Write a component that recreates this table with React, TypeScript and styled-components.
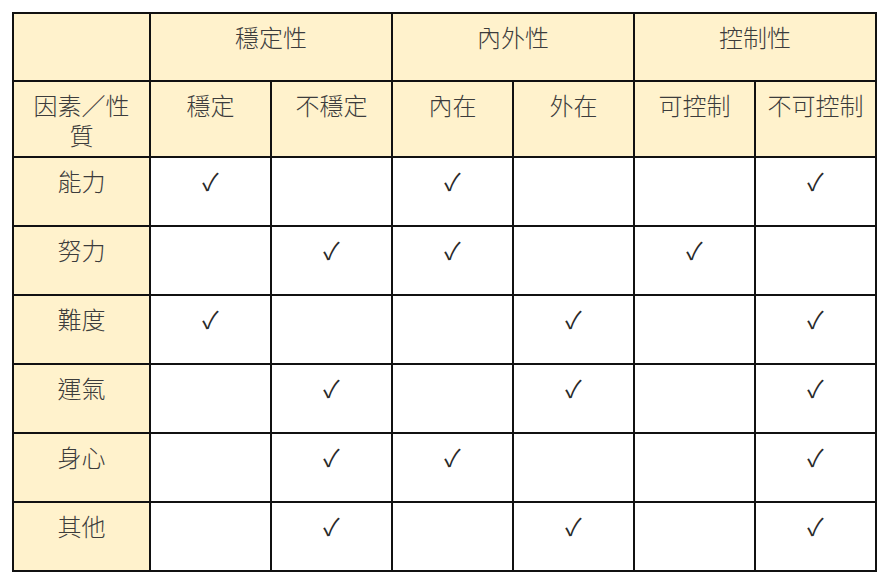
import React from "react";
import styled, { createGlobalStyle } from "styled-components";

const GlobalStyle = createGlobalStyle`
  html, body { margin: 0; padding: 0; background: #ffffff; }
  body { font-family: "Noto Sans CJK TC", "Noto Sans CJK SC", "Noto Sans", sans-serif; }
`;

const Page = styled.div`
  padding: 12px 0 0 12px;
`;

const Grid = styled.div`
  display: grid;
  width: max-content;
  grid-template-columns: 135px repeat(6, 119px);
  grid-template-rows: 66px 74px repeat(6, 67px);
  gap: 2px;
  padding: 2px;
  background: #111111;
`;

const Cell = styled.div<{ $head?: boolean; $span?: number }>`
  grid-column: span ${(p) => p.$span ?? 1};
  background: ${(p) => (p.$head ? "#fff2cc" : "#ffffff")};
  color: #3c3c3c;
  font-size: 24px;
  font-weight: 300;
  line-height: 30px;
  text-align: center;
  padding: 8px 10px 0;
  box-sizing: border-box;
  overflow: hidden;
`;

const Check = styled.span`
  font-family: "Noto Sans CJK TC", "DejaVu Sans", sans-serif;
  font-size: 24px;
  font-weight: 400;
  color: #2a2a2a;
`;

const subHeads = ["穩定", "不穩定", "內在", "外在", "可控制", "不可控制"];

const rows: { name: string; marks: boolean[] }[] = [
  { name: "能力", marks: [true, false, true, false, false, true] },
  { name: "努力", marks: [false, true, true, false, true, false] },
  { name: "難度", marks: [true, false, false, true, false, true] },
  { name: "運氣", marks: [false, true, false, true, false, true] },
  { name: "身心", marks: [false, true, true, false, false, true] },
  { name: "其他", marks: [false, true, false, true, false, true] },
];

export default function App() {
  return (
    <>
      <GlobalStyle />
      <Page>
        <Grid>
          <Cell $head />
          <Cell $head $span={2}>穩定性</Cell>
          <Cell $head $span={2}>內外性</Cell>
          <Cell $head $span={2}>控制性</Cell>
          <Cell $head>因素／性質</Cell>
          {subHeads.map((h) => (
            <Cell $head key={h}>{h}</Cell>
          ))}
          {rows.map((r) => (
            <React.Fragment key={r.name}>
              <Cell $head>{r.name}</Cell>
              {r.marks.map((m, i) => (
                <Cell key={i}>{m ? <Check>✓</Check> : null}</Cell>
              ))}
            </React.Fragment>
          ))}
        </Grid>
      </Page>
    </>
  );
}
